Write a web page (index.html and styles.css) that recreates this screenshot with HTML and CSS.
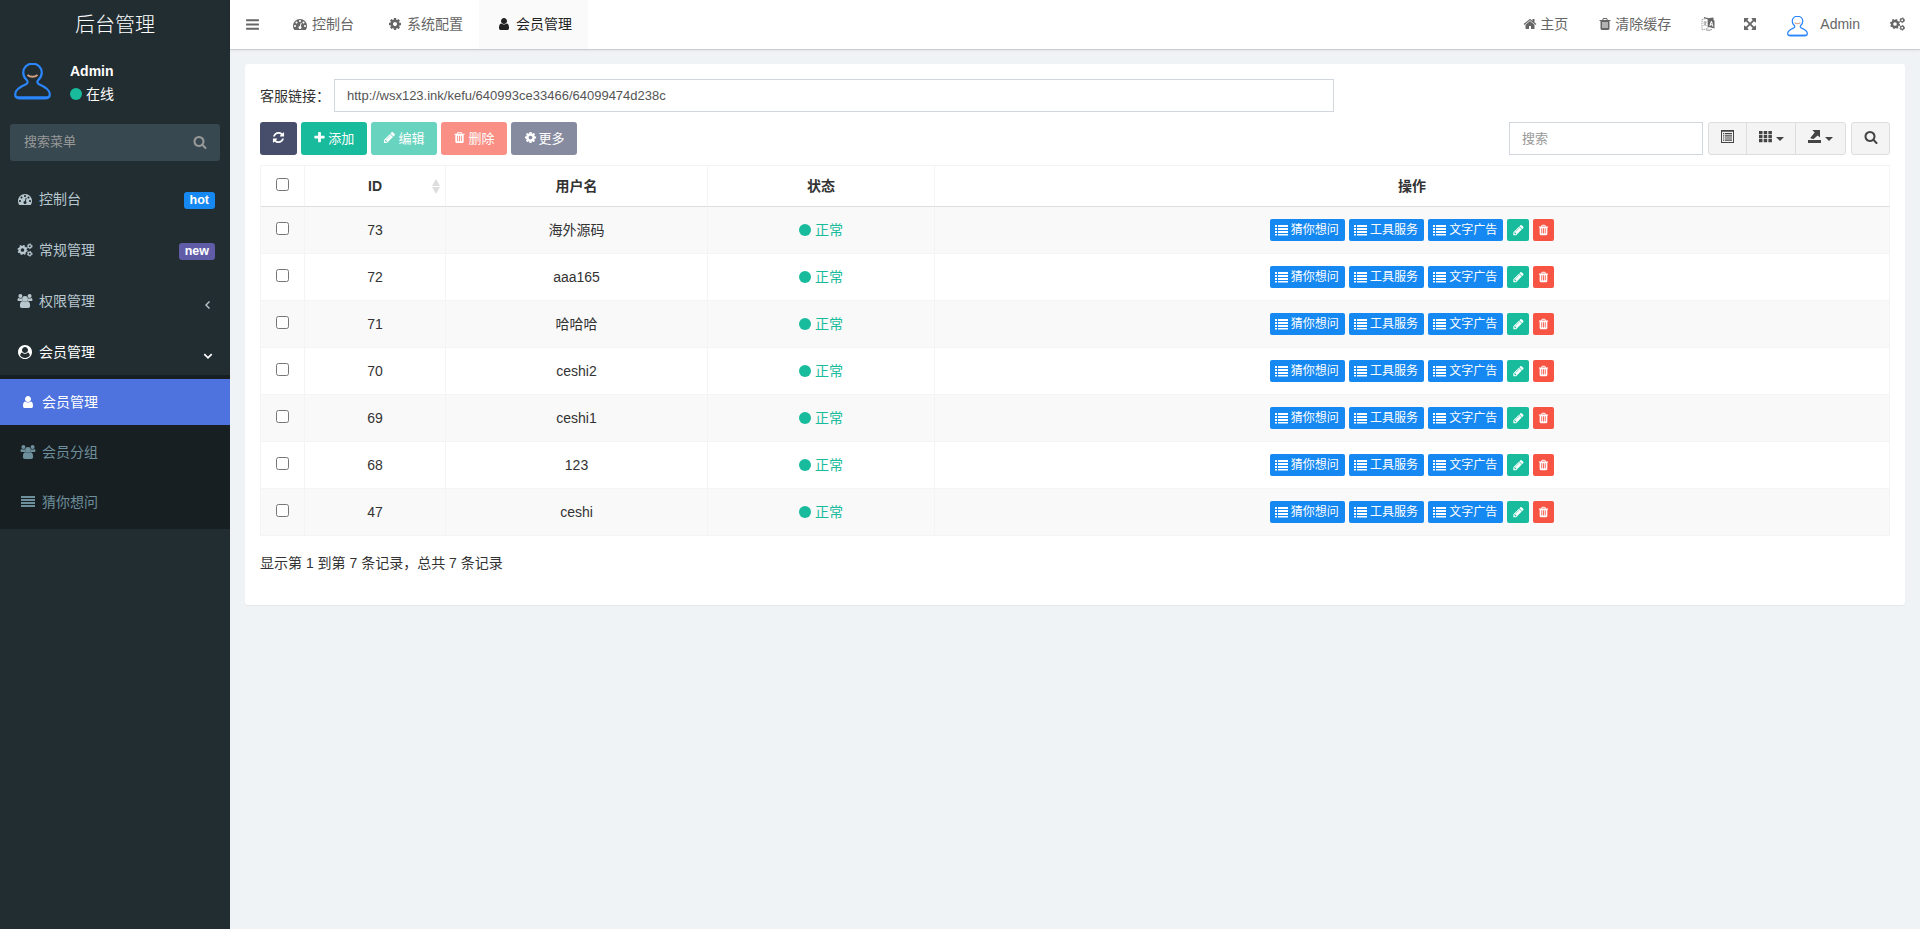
FILE: index.html
```html
<!DOCTYPE html>
<html lang="zh-CN">
<head>
    <meta charset="UTF-8">
    <meta name="viewport" content="width=device-width, initial-scale=1.0">
    <title>会员管理</title>
    <link rel="stylesheet" href="styles.css">
</head>
<body>
    <!-- icon sprite -->
    <svg class="sprite">
        <symbol id="i-bars" viewBox="0 0 1792 1792"><path d="M1664 1344v128q0 26-19 45t-45 19h-1408q-26 0-45-19t-19-45v-128q0-26 19-45t45-19h1408q26 0 45 19t19 45zm0-512v128q0 26-19 45t-45 19h-1408q-26 0-45-19t-19-45v-128q0-26 19-45t45-19h1408q26 0 45 19t19 45zm0-512v128q0 26-19 45t-45 19h-1408q-26 0-45-19t-19-45v-128q0-26 19-45t45-19h1408q26 0 45 19t19 45z"/></symbol>
        <symbol id="i-search" viewBox="0 0 1792 1792"><path d="M1216 832q0-185-131.500-316.500t-316.500-131.500-316.500 131.500-131.500 316.500 131.500 316.500 316.500 131.500 316.500-131.500 131.500-316.500zm512 832q0 52-38 90t-90 38q-54 0-90-38l-343-342q-179 124-399 124-143 0-273.500-55.500t-225-150-150-225-55.500-273.500 55.500-273.500 150-225 225-150 273.500-55.500 273.500 55.500 225 150 150 225 55.500 273.500q0 220-124 399l343 343q37 37 37 90z"/></symbol>
        <symbol id="i-cog" viewBox="0 0 1792 1792"><path d="M1152 896q0-106-75-181t-181-75-181 75-75 181 75 181 181 75 181-75 75-181zm512-109v222q0 12-8 23t-20 13l-185 28q-19 54-39 91 35 50 107 138 10 12 10 25t-9 23q-27 37-99 108t-94 71q-12 0-26-9l-138-108q-44 23-91 38-16 136-29 186-7 28-36 28h-222q-14 0-24.500-8.500t-11.500-21.500l-28-184q-49-16-90-37l-141 107q-10 9-25 9-14 0-25-11-126-114-165-168-7-10-7-23 0-12 8-23 15-21 51-66.500t54-70.500q-27-50-41-99l-183-27q-13-2-21-12.500t-8-23.500v-222q0-12 8-23t19-13l186-28q14-46 39-92-40-57-107-138-10-12-10-24 0-10 9-23 26-36 98.500-107.500t94.500-71.500q13 0 26 10l138 107q44-23 91-38 16-136 29-186 7-28 36-28h222q14 0 24.500 8.500t11.500 21.500l28 184q49 16 90 37l142-107q9-9 24-9 13 0 25 10 129 119 165 170 7 8 7 22 0 12-8 23-15 21-51 66.500t-54 70.500q26 50 41 98l183 28q13 2 21 12.500t8 23.500z"/></symbol>
        <symbol id="i-cogs" viewBox="0 0 15 14"><g fill="none" stroke="currentColor"><circle cx="5" cy="7" r="3" stroke-width="2.300"/><circle cx="5" cy="7" r="4.400" stroke-width="1.300" stroke-dasharray="1.730"/><circle cx="12.200" cy="3.200" r="1.600" stroke-width="1.300"/><circle cx="12.200" cy="3.200" r="2.400" stroke-width=".9" stroke-dasharray="1.260"/><circle cx="12.200" cy="10.800" r="1.600" stroke-width="1.300"/><circle cx="12.200" cy="10.800" r="2.400" stroke-width=".9" stroke-dasharray="1.260"/></g></symbol>
        <symbol id="i-user" viewBox="0 0 1792 1792"><path d="M1536 1399q0 109-62.500 187t-150.500 78h-854q-88 0-150.500-78t-62.500-187q0-85 8.500-160.500t31.500-152 58.500-131 94-89 134.500-34.500q131 128 313 128t313-128q76 0 134.500 34.500t94 89 58.500 131 31.500 152 8.500 160.500zm-256-887q0 159-112.500 271.500t-271.500 112.500-271.500-112.500-112.500-271.500 112.500-271.500 271.500-112.500 271.500 112.500 112.500 271.500z"/></symbol>
        <symbol id="i-users" viewBox="0 0 15 14"><circle cx="2.900" cy="2" r="2"/><circle cx="12.100" cy="2" r="2"/><path d="M0 6.300C0 5 .3 4 1.100 4c.9.700 2.400.7 3.300.2 0 1.200.2 2 .8 2.800H1.500C.6 7 0 6.900 0 6.300zM15 6.300c0-1.300-.3-2.300-1.100-2.300-.9.700-2.400.7-3.300.2 0 1.200-.2 2-.8 2.800h3.700c.9 0 1.500-.1 1.500-.7z"/><circle cx="7.500" cy="4.900" r="2.900"/><path d="M2.400 11.800c0-2.600.7-4.500 2.700-4.500 1.400 1.100 3.400 1.100 4.800 0 2 0 2.700 1.900 2.700 4.500 0 1.400-.8 2.200-2 2.200H4.400c-1.200 0-2-.8-2-2.200z"/></symbol>
        <symbol id="i-user-circle" viewBox="0 0 1792 1792"><path fill-rule="evenodd" d="M1523 1339q-22-155-87.500-257.500t-184.500-118.500q-67 74-159.500 115.500t-195.500 41.500-195.500-41.500-159.500-115.500q-119 16-184.500 118.500t-87.500 257.500q106 150 271 237.500t356 87.500 356-87.500 271-237.500zm-243-699q0-159-112.500-271.500t-271.500-112.500-271.500 112.500-112.500 271.500 112.500 271.500 271.500 112.500 271.500-112.500 112.500-271.500zm512 256q0 182-71 347.500t-190.500 286-285.500 191.500-349 71q-182 0-348-71t-286-191-191-286-71-348 71-348 191-286 286-191 348-71 348 71 286 191 191 286 71 348z"/></symbol>
        <symbol id="i-home" viewBox="0 0 1792 1792"><path d="M1472 992v480q0 26-19 45t-45 19h-384v-384h-256v384h-384q-26 0-45-19t-19-45v-480q0-1 .5-3t.5-3l575-474 575 474q1 2 1 6zm223-69l-62 74q-8 9-21 11h-3q-13 0-21-7l-692-577-692 577q-12 8-24 7-13-2-21-11l-62-74q-8-10-7-23.500t11-21.500l719-599q32-26 76-26t76 26l244 204v-195q0-14 9-23t23-9h192q14 0 23 9t9 23v408l219 182q10 8 11 21.500t-7 23.500z"/></symbol>
        <symbol id="i-trash" viewBox="0 0 1792 1792"><path d="M704 1376v-704q0-14-9-23t-23-9h-64q-14 0-23 9t-9 23v704q0 14 9 23t23 9h64q14 0 23-9t9-23zm256 0v-704q0-14-9-23t-23-9h-64q-14 0-23 9t-9 23v704q0 14 9 23t23 9h64q14 0 23-9t9-23zm256 0v-704q0-14-9-23t-23-9h-64q-14 0-23 9t-9 23v704q0 14 9 23t23 9h64q14 0 23-9t9-23zm-544-992h448l-48-117q-7-9-17-11h-317q-10 2-17 11zm928 32v64q0 14-9 23t-23 9h-96v948q0 83-47 143.500t-113 60.500h-832q-66 0-113-58.500t-47-141.500v-952h-96q-14 0-23-9t-9-23v-64q0-14 9-23t23-9h309l70-167q15-37 54-63t79-26h320q40 0 79 26t54 63l70 167h309q14 0 23 9t9 23z"/></symbol>
        <symbol id="i-refresh" viewBox="0 0 1792 1792"><path d="M1639 1056q0 5-1 7-64 268-268 434.500t-478 166.500q-146 0-282.500-55t-243.500-157l-129 129q-19 19-45 19t-45-19-19-45v-448q0-26 19-45t45-19h448q26 0 45 19t19 45-19 45l-137 137q71 66 161 102t187 36q134 0 250-65t186-179q11-17 53-117 8-23 30-23h192q13 0 22.500 9.500t9.500 22.500zm25-800v448q0 26-19 45t-45 19h-448q-26 0-45-19t-19-45 19-45l138-138q-148-137-349-137-134 0-250 65t-186 179q-11 17-53 117-8 23-30 23h-199q-13 0-22.500-9.500t-9.500-22.500v-7q65-268 270-434.500t480-166.500q146 0 284 55.500t245 156.500l130-129q19-19 45-19t45 19 19 45z"/></symbol>
        <symbol id="i-plus" viewBox="0 0 1792 1792"><path d="M1600 736v192q0 40-28 68t-68 28h-416v416q0 40-28 68t-68 28h-192q-40 0-68-28t-28-68v-416h-416q-40 0-68-28t-28-68v-192q0-40 28-68t68-28h416v-416q0-40 28-68t68-28h192q40 0 68 28t28 68v416h416q40 0 68 28t28 68z"/></symbol>
        <symbol id="i-pencil" viewBox="0 0 1792 1792"><path d="M491 1536l91-91-235-235-91 91v107h128v128h107zm523-928q0-22-22-22-10 0-17 7l-542 542q-7 7-7 17 0 22 22 22 10 0 17-7l542-542q7-7 7-17zm-54-192l416 416-832 832h-416v-416zm683 96q0 53-37 90l-166 166-416-416 166-165q36-38 90-38 53 0 91 38l235 234q37 39 37 91z"/></symbol>
        <symbol id="i-dashboard" viewBox="0 0 1792 1792"><path d="M384 1152q0-53-37.500-90.500t-90.500-37.500-90.500 37.500-37.500 90.500 37.500 90.500 90.500 37.500 90.500-37.500 37.500-90.500zm192-448q0-53-37.500-90.500t-90.500-37.500-90.500 37.500-37.500 90.500 37.500 90.500 90.500 37.500 90.500-37.500 37.500-90.500zm428 481l101-382q6-26-7.500-48.500t-38.500-29.500-48 6.500-30 39.500l-101 382q-60 5-107 43.500t-63 98.500q-20 77 20 146t117 89 146-20 89-117q16-60-6-117t-72-91zm660-33q0-53-37.500-90.500t-90.500-37.500-90.500 37.500-37.500 90.500 37.500 90.500 90.500 37.500 90.500-37.500 37.500-90.500zm-640-640q0-53-37.500-90.500t-90.500-37.500-90.500 37.500-37.500 90.500 37.500 90.500 90.500 37.500 90.500-37.500 37.500-90.500zm448 192q0-53-37.500-90.500t-90.500-37.500-90.500 37.500-37.500 90.500 37.500 90.500 90.500 37.500 90.500-37.500 37.500-90.500zm320 448q0 261-141 483-19 29-54 29h-1402q-35 0-54-29-141-221-141-483 0-182 71-348t191-286 286-191 348-71 348 71 286 191 191 286 71 348z"/></symbol>
        <symbol id="i-expand" viewBox="0 0 1792 1792"><path d="M1411 541l-355 355 355 355 144-144q29-31 70-14 39 17 39 59v448q0 26-19 45t-45 19h-448q-42 0-59-40-17-39 14-69l144-144-355-355-355 355 144 144q31 30 14 69-17 40-59 40h-448q-26 0-45-19t-19-45v-448q0-42 40-59 39-17 69 14l144 144 355-355-355-355-144 144q-19 19-45 19-12 0-24-5-40-17-40-59v-448q0-26 19-45t45-19h448q42 0 59 40 17 39-14 69l-144 144 355 355 355-355-144-144q-31-30-14-69 17-40 59-40h448q26 0 45 19t19 45v448q0 42-39 59-13 5-25 5-26 0-45-19z"/></symbol>
        <symbol id="i-lang" viewBox="0 0 14 14"><path d="M1 2.500L7 1v10.500L1 13z" fill="none" stroke="currentColor" stroke-width=".6" stroke-dasharray="1.500 .7"/><path d="M2.500 5.200h3M4 4.200v1M5 5.500C4.500 7 3.500 8.200 2.500 9M3 6.200c.6 1.200 1.500 2 2.600 2.500" fill="none" stroke="currentColor" stroke-width=".6"/><path fill-rule="evenodd" d="M3 0l4 1.200L12.500.6V3l1 .4v8.200L6.800 9.800V2.200L3 1.300zM10 4L8.300 8.800l1 .3.4-1.100 1.500.4.300 1.200 1 .3L11 4.300zm.4 1.700l.5 1.700-1-.3z"/><path d="M5 12.800c2 .9 4 .6 6-.6" fill="none" stroke="currentColor" stroke-width=".7"/></symbol>
        <symbol id="i-justify" viewBox="0 0 14 14"><path d="M0 1h14v2H0zM0 4h14v2H0zM0 7h14v2H0zM0 10h14v2H0z"/></symbol>
        <symbol id="i-list" viewBox="0 0 13 12"><path d="M0 1h2v2H0zM3 1h10v2H3zM0 4h2v2H0zM3 4h10v2H3zM0 7h2v2H0zM3 7h10v2H3zM0 10h2v1.500H0zM3 10h10v1.500H3z"/></symbol>
        <symbol id="i-left" viewBox="0 0 14 14"><path d="M8.500 3.500L5 7l3.500 3.500" fill="none" stroke="currentColor" stroke-width="1.400"/></symbol>
        <symbol id="i-down" viewBox="0 0 14 14"><path d="M3.300 5.200L7 8.900l3.700-3.700" fill="none" stroke="currentColor" stroke-width="1.700"/></symbol>
        <symbol id="i-detail" viewBox="0 0 13 13"><path fill-rule="evenodd" d="M0 0h13v13H0zM1 1.800V12h11V1.800z"/><path d="M2 3h1.300v1.200H2zM4 3h7v1.200H4zM2 5.200h1.300v1.200H2zM4 5.200h7v1.200H4zM2 7.400h1.300v1.200H2zM4 7.400h7v1.200H4zM2 9.600h1.300v1.200H2zM4 9.600h7v1.200H4z"/></symbol>
        <symbol id="i-grid" viewBox="0 0 13 13"><path d="M0 1h3.500v3.200H0zM4.700 1h3.500v3.200H4.700zM9.400 1h3.500v3.200H9.400zM0 5h3.500v3.200H0zM4.700 5h3.500v3.200H4.700zM9.400 5h3.500v3.200H9.400zM0 9h3.500v3.200H0zM4.700 9h3.500v3.200H4.700zM9.400 9h3.500v3.200H9.400z"/></symbol>
        <symbol id="i-export" viewBox="0 0 13 13"><path d="M0 10h13v3H0zM4.300 0H12v7.600L9.700 5.400 5.600 8.900 2.700 8.500 2.600 7.400 6.700 2.500z"/></symbol>
        <symbol id="i-avatar" viewBox="0 0 38 38"><path d="M19 1.200c-5.600 0-9.500 4-9.500 9.300 0 3.200 1.500 5.600 3.700 7.700 1.300 1.300 1 3.200-.9 4.100C6.500 24.800 1.200 27.500 1.200 32.500c0 3.500 2.300 4.300 5.300 4.300h25c3 0 5.300-.8 5.300-4.300 0-5-5.300-7.700-11.100-10.200-1.900-.9-2.200-2.800-.9-4.100 2.200-2.100 3.700-4.500 3.700-7.700 0-5.300-3.900-9.300-9.500-9.300z" fill="none" stroke="#2b85fb" stroke-width="2.300"/><path d="M3 35.800h32" stroke="#2b85fb" stroke-width="2.500"/><path d="M13.800 12.800c3 2.500 7.400 2.500 10.400 0" fill="none" stroke="#d6a181" stroke-width="1.900"/></symbol>
    </svg>

    <aside class="sidebar">
        <div class="logo">后台管理</div>
        <div class="user-panel">
            <svg class="avatar"><use href="#i-avatar"/></svg>
            <div class="info">
                <strong>Admin</strong>
                <span><i class="dot"></i>在线</span>
            </div>
        </div>
        <div class="menu-search">
            <span>搜索菜单</span>
            <svg class="icon"><use href="#i-search"/></svg>
        </div>
        <ul class="menu">
            <li><svg class="icon"><use href="#i-dashboard"/></svg>控制台<span class="label blue">hot</span></li>
            <li><svg class="icon cogs"><use href="#i-cogs"/></svg>常规管理<span class="label purple">new</span></li>
            <li><svg class="icon"><use href="#i-users"/></svg>权限管理<svg class="icon arrow"><use href="#i-left"/></svg></li>
            <li class="open"><svg class="icon"><use href="#i-user-circle"/></svg>会员管理<svg class="icon arrow"><use href="#i-down"/></svg></li>
        </ul>
        <ul class="submenu">
            <li class="active"><svg class="icon"><use href="#i-user"/></svg>会员管理</li>
            <li><svg class="icon"><use href="#i-users"/></svg>会员分组</li>
            <li><svg class="icon"><use href="#i-justify"/></svg>猜你想问</li>
        </ul>
    </aside>

    <div class="main">
        <header class="navbar">
            <a class="toggle"><svg class="icon"><use href="#i-bars"/></svg></a>
            <a class="tab"><svg class="icon"><use href="#i-dashboard"/></svg>控制台</a>
            <a class="tab"><svg class="icon"><use href="#i-cog"/></svg>系统配置</a>
            <a class="tab active"><svg class="icon"><use href="#i-user"/></svg>会员管理</a>
            <nav class="nav-right">
                <a><svg class="icon"><use href="#i-home"/></svg>主页</a>
                <a><svg class="icon"><use href="#i-trash"/></svg>清除缓存</a>
                <a class="lang"><svg class="icon"><use href="#i-lang"/></svg></a>
                <a><svg class="icon"><use href="#i-expand"/></svg></a>
                <a class="nav-user"><svg class="avatar-sm"><use href="#i-avatar"/></svg>Admin</a>
                <a><svg class="icon cogs"><use href="#i-cogs"/></svg></a>
            </nav>
        </header>

        <section class="panel">
            <div class="link-row">
                <label for="link">客服链接：</label>
                <input type="text" id="link" class="input" value="http://wsx123.ink/kefu/640993ce33466/64099474d238c">
            </div>

            <div class="toolbar">
                <button class="btn dark refresh"><svg class="icon"><use href="#i-refresh"/></svg></button>
                <button class="btn green add"><svg class="icon"><use href="#i-plus"/></svg>添加</button>
                <button class="btn green disabled"><svg class="icon"><use href="#i-pencil"/></svg>编辑</button>
                <button class="btn red disabled del"><svg class="icon"><use href="#i-trash"/></svg>删除</button>
                <button class="btn dark disabled"><svg class="icon"><use href="#i-cog"/></svg>更多</button>
                <div class="tools">
                    <input type="text" class="input search" placeholder="搜索">
                    <div class="btn-group">
                        <button><svg class="icon"><use href="#i-detail"/></svg></button>
                        <button class="columns"><svg class="icon"><use href="#i-grid"/></svg><i class="caret"></i></button>
                        <button class="export"><svg class="icon"><use href="#i-export"/></svg><i class="caret"></i></button>
                    </div>
                    <div class="btn-group">
                        <button><svg class="icon"><use href="#i-search"/></svg></button>
                    </div>
                </div>
            </div>

            <table class="table">
                <colgroup><col class="c-check"><col class="c-id"><col class="c-name"><col class="c-status"><col></colgroup>
                <thead>
                    <tr>
                        <th><input type="checkbox"></th>
                        <th class="sortable">ID<i class="sort"></i></th>
                        <th>用户名</th>
                        <th>状态</th>
                        <th>操作</th>
                    </tr>
                </thead>
                <tbody>
                    <tr>
                        <td><input type="checkbox"></td><td>73</td><td>海外源码</td>
                        <td><span class="status"><i></i>正常</span></td>
                        <td><div class="ops">
                            <a class="op"><svg><use href="#i-list"/></svg>猜你想问</a>
                            <a class="op"><svg><use href="#i-list"/></svg>工具服务</a>
                            <a class="op"><svg><use href="#i-list"/></svg>文字广告</a>
                            <a class="op edit"><svg><use href="#i-pencil"/></svg></a>
                            <a class="op del"><svg><use href="#i-trash"/></svg></a>
                        </div></td>
                    </tr>
                    <tr>
                        <td><input type="checkbox"></td><td>72</td><td>aaa165</td>
                        <td><span class="status"><i></i>正常</span></td>
                        <td><div class="ops">
                            <a class="op"><svg><use href="#i-list"/></svg>猜你想问</a>
                            <a class="op"><svg><use href="#i-list"/></svg>工具服务</a>
                            <a class="op"><svg><use href="#i-list"/></svg>文字广告</a>
                            <a class="op edit"><svg><use href="#i-pencil"/></svg></a>
                            <a class="op del"><svg><use href="#i-trash"/></svg></a>
                        </div></td>
                    </tr>
                    <tr>
                        <td><input type="checkbox"></td><td>71</td><td>哈哈哈</td>
                        <td><span class="status"><i></i>正常</span></td>
                        <td><div class="ops">
                            <a class="op"><svg><use href="#i-list"/></svg>猜你想问</a>
                            <a class="op"><svg><use href="#i-list"/></svg>工具服务</a>
                            <a class="op"><svg><use href="#i-list"/></svg>文字广告</a>
                            <a class="op edit"><svg><use href="#i-pencil"/></svg></a>
                            <a class="op del"><svg><use href="#i-trash"/></svg></a>
                        </div></td>
                    </tr>
                    <tr>
                        <td><input type="checkbox"></td><td>70</td><td>ceshi2</td>
                        <td><span class="status"><i></i>正常</span></td>
                        <td><div class="ops">
                            <a class="op"><svg><use href="#i-list"/></svg>猜你想问</a>
                            <a class="op"><svg><use href="#i-list"/></svg>工具服务</a>
                            <a class="op"><svg><use href="#i-list"/></svg>文字广告</a>
                            <a class="op edit"><svg><use href="#i-pencil"/></svg></a>
                            <a class="op del"><svg><use href="#i-trash"/></svg></a>
                        </div></td>
                    </tr>
                    <tr>
                        <td><input type="checkbox"></td><td>69</td><td>ceshi1</td>
                        <td><span class="status"><i></i>正常</span></td>
                        <td><div class="ops">
                            <a class="op"><svg><use href="#i-list"/></svg>猜你想问</a>
                            <a class="op"><svg><use href="#i-list"/></svg>工具服务</a>
                            <a class="op"><svg><use href="#i-list"/></svg>文字广告</a>
                            <a class="op edit"><svg><use href="#i-pencil"/></svg></a>
                            <a class="op del"><svg><use href="#i-trash"/></svg></a>
                        </div></td>
                    </tr>
                    <tr>
                        <td><input type="checkbox"></td><td>68</td><td>123</td>
                        <td><span class="status"><i></i>正常</span></td>
                        <td><div class="ops">
                            <a class="op"><svg><use href="#i-list"/></svg>猜你想问</a>
                            <a class="op"><svg><use href="#i-list"/></svg>工具服务</a>
                            <a class="op"><svg><use href="#i-list"/></svg>文字广告</a>
                            <a class="op edit"><svg><use href="#i-pencil"/></svg></a>
                            <a class="op del"><svg><use href="#i-trash"/></svg></a>
                        </div></td>
                    </tr>
                    <tr>
                        <td><input type="checkbox"></td><td>47</td><td>ceshi</td>
                        <td><span class="status"><i></i>正常</span></td>
                        <td><div class="ops">
                            <a class="op"><svg><use href="#i-list"/></svg>猜你想问</a>
                            <a class="op"><svg><use href="#i-list"/></svg>工具服务</a>
                            <a class="op"><svg><use href="#i-list"/></svg>文字广告</a>
                            <a class="op edit"><svg><use href="#i-pencil"/></svg></a>
                            <a class="op del"><svg><use href="#i-trash"/></svg></a>
                        </div></td>
                    </tr>
                </tbody>
            </table>
            <div class="pagination">显示第 1 到第 7 条记录，总共 7 条记录</div>
        </section>
    </div>
</body>
</html>
```
FILE: styles.css
```css
* { box-sizing: border-box; }

body {
    margin: 0;
    height: 100vh;
    display: flex;
    overflow: hidden;
    background: #eff3f6;
    color: #333;
    font: 14px/20px "Liberation Sans", "Noto Sans CJK SC", Arial, sans-serif;
}

ul { list-style: none; margin: 0; padding: 0; }

button, input { font-family: inherit; }

svg { fill: currentColor; flex: none; }

.sprite { position: absolute; width: 0; height: 0; }

.icon { width: 14px; height: 14px; }

/* sidebar */
.sidebar {
    width: 230px;
    flex: none;
    background: #222d32;
    color: #b8c7ce;
}

.logo {
    height: 50px;
    line-height: 50px;
    text-align: center;
    font-size: 20px;
    font-weight: 300;
    color: #fff;
}

.user-panel {
    display: flex;
    height: 74px;
    padding: 12px 14px;
    color: #fff;
}

.avatar { width: 37px; height: 38px; }

.info {
    display: flex;
    flex-direction: column;
    gap: 3px;
    margin-left: 19px;
}

.info strong { line-height: 18px; }

.info span { display: flex; align-items: center; line-height: 22px; }

.dot {
    width: 12px;
    height: 12px;
    margin-right: 4px;
    border-radius: 50%;
    background: #18bc9c;
}

.menu-search {
    display: flex;
    align-items: center;
    justify-content: space-between;
    height: 37px;
    margin: 0 10px 12px;
    padding: 0 13px 1px 14px;
    border-radius: 3px;
    background: #374850;
    color: #999;
    font-size: 13px;
}

.menu li {
    display: flex;
    align-items: center;
    height: 51px;
    padding: 0 15px 0 17px;
}

.menu li > .icon:first-child { width: 16px; margin-right: 6px; }

.menu .arrow { margin: 8px 0 0 auto; }

.menu .open { color: #fff; }

.label {
    margin: 3px 0 0 auto;
    padding: 0 6px;
    border-radius: 3px;
    color: #fff;
    font-size: 12.500px;
    font-weight: bold;
    line-height: 17px;
}

.label.blue { background: #1688f1; }
.label.purple { background: #605ca8; }

.submenu {
    display: flex;
    flex-direction: column;
    gap: 4px;
    padding: 4px 0;
    margin-top: -2px;
    background: #181f23;
    color: #6e8f9c;
}

.submenu li {
    display: flex;
    align-items: center;
    height: 46px;
    padding-left: 20px;
}

.submenu .icon { width: 16px; margin-right: 6px; }

.submenu .active { background: #4e73df; color: #fff; }

/* top bar */
.main { flex: 1; min-width: 0; }

.navbar {
    display: flex;
    height: 49px;
    background: #fff;
    color: #666;
    box-shadow: 0 1px 1px rgba(0, 0, 0, .12), 0 1px 4px rgba(0, 0, 0, .06);
}

.navbar a {
    display: flex;
    align-items: center;
    padding-bottom: 1px;
}

.navbar .toggle { padding: 0 15px 1px; }

.toggle .icon { width: 15px; height: 15px; }

.navbar .tab { padding: 0 16px 1px; gap: 3px; }

.tab .icon { width: 18px; }

.tab.active { background: #fafafa; color: #222; }

.nav-right { display: flex; margin-left: auto; padding-right: 15px; gap: 30px; }

.nav-right a { gap: 3px; }

.nav-right .lang { margin-right: -2px; }

.nav-right .nav-user { gap: 12px; }

.avatar-sm { width: 21px; height: 22px; margin-top: 3px; }

.icon.cogs { width: 15px; }

/* content */
.panel {
    height: 541px;
    margin: 15px;
    padding: 15px;
    border-radius: 3px;
    background: #fff;
    box-shadow: 0 1px 1px rgba(0, 0, 0, .05);
}

.link-row { display: flex; align-items: center; }

.link-row label { width: 74px; }

.input {
    width: 1000px;
    height: 33px;
    padding: 0 12px;
    border: 1px solid #d2d6de;
    background: #fff;
    color: #555;
    font-size: 13px;
    outline: none;
}

.input::placeholder { color: #999; opacity: 1; }

.toolbar {
    display: flex;
    gap: 3.800px;
    margin: 10px 0;
}

.btn {
    display: flex;
    align-items: center;
    justify-content: center;
    gap: 2px;
    width: 66.600px;
    height: 33px;
    padding: 0 0 3px;
    border: 0;
    border-radius: 3px;
    color: #fff;
    font-size: 13px;
}

.btn .icon { width: 13px; height: 13px; }

.btn.refresh { width: 37px; }
.btn.add, .btn.del { width: 66px; }
.btn.dark { background: #474e6c; }
.btn.green { background: #18bc9c; }
.btn.red { background: #f75444; }
.btn.disabled { opacity: .65; }

.tools { display: flex; gap: 5px; margin-left: auto; }

.input.search { width: 194px; }

.btn-group { display: flex; }

.btn-group button {
    display: flex;
    align-items: center;
    justify-content: center;
    width: 39px;
    height: 33px;
    padding: 0 0 4px;
    border: 1px solid #ddd;
    margin-left: -1px;
    background: #f4f4f4;
    color: #444;
}

.btn-group .columns { width: 50px; }
.btn-group .export { width: 51px; }

.btn-group button:first-child { margin-left: 0; border-radius: 3px 0 0 3px; }
.btn-group button:last-child { border-radius: 0 3px 3px 0; }
.btn-group button:only-child { border-radius: 3px; }

.btn-group .icon { width: 13px; height: 13px; }
.btn-group button:only-child .icon { width: 14px; height: 14px; }

.caret {
    margin: 5px 0 0 4px;
    border-top: 4px solid;
    border-left: 4px solid transparent;
    border-right: 4px solid transparent;
}

.table {
    width: 100%;
    table-layout: fixed;
    border-collapse: separate;
    border-spacing: 0;
    border: 1px solid #f4f4f4;
    border-width: 1px 0 0 1px;
}

.c-check { width: 44px; }
.c-id { width: 141px; }
.c-name { width: 262px; }
.c-status { width: 227px; }

.table th, .table td {
    height: 47px;
    padding: 0;
    border: 1px solid #f4f4f4;
    border-width: 0 1px 1px 0;
    text-align: center;
}

.table th { height: 41px; border-bottom-color: #ddd; }

.table tbody tr:nth-child(odd) { background: #f9f9f9; }

.table input {
    display: block;
    width: 13px;
    height: 13px;
    margin: -3px auto 0;
}

.sortable { position: relative; }

.sort {
    position: absolute;
    right: 5px;
    top: 13px;
    height: 15px;
    display: flex;
    flex-direction: column;
    justify-content: space-between;
}

.sort::before, .sort::after {
    content: "";
    border: 4px solid transparent;
}

.sort::before { border-bottom: 7px solid #ddd; border-top: 0; }
.sort::after { border-top: 7px solid #ddd; border-bottom: 0; }

.status {
    display: flex;
    align-items: center;
    justify-content: center;
    gap: 4px;
    color: #18bc9c;
}

.status i {
    width: 12px;
    height: 12px;
    border-radius: 50%;
    background: currentColor;
}

.ops { display: flex; justify-content: center; gap: 4px; }

.op {
    display: flex;
    align-items: center;
    justify-content: center;
    gap: 3px;
    width: 75.300px;
    height: 22px;
    padding-right: 1px;
    border-radius: 2px;
    background: #1688f1;
    color: #fff;
    font-size: 12px;
}

.op svg { width: 13px; height: 12px; }

.op.edit { width: 22px; padding: 0; background: #18bc9c; }
.op.del { width: 21px; padding: 0; background: #f75444; }

.pagination { margin-top: 17px; }
```
